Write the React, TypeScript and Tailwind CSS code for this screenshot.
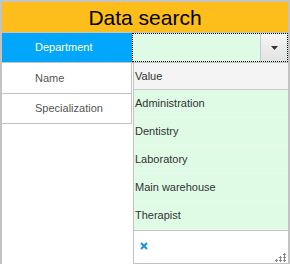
import React from "react";

const font = { fontFamily: '"Liberation Sans", Arial, sans-serif' };

export default function App() {
  const items = ["Administration", "Dentistry", "Laboratory", "Main warehouse", "Therapist"];
  return (
    <div
      className="relative w-[290px] h-[264px] overflow-hidden bg-white border-l-2 border-t-2 border-r-2 border-[#c3c3c3]"
      style={font}
    >
      <div className="h-[31px] bg-[#fdbe1c] border-b border-[#c3c3c3] flex items-center justify-center text-[21px] text-black leading-none">
        Data search
      </div>
      <div className="flex h-[30px] border-b border-[#c3c3c3]">
        <div className="w-[130px] bg-[#02a7fb] text-white text-[11px] flex items-center pl-[33px]">
          Department
        </div>
        <div className="flex-1 flex bg-[#dffbe6] border border-dotted border-black">
          <div className="flex-1" />
          <div className="w-[27px] border-l border-[#c9c9c9] bg-gradient-to-b from-[#f5f5f5] to-[#e3e3e3] flex items-center justify-center">
            <svg width="7" height="4" viewBox="0 0 7 4">
              <path d="M0 0H7L3.5 4Z" fill="#333" />
            </svg>
          </div>
        </div>
      </div>
      <div className="w-[130px] border-r border-[#c3c3c3]">
        <div className="h-[31px] border-b border-[#c3c3c3] flex items-center pl-[33px] text-[11px] text-[#555]">
          Name
        </div>
        <div className="h-[30px] border-b border-[#c3c3c3] flex items-center pl-[33px] text-[11px] text-[#555]">
          Specialization
        </div>
      </div>

      <div className="absolute left-[131px] top-[60px] w-[156px] h-[202px] border border-[#c3c3c3] bg-white flex flex-col">
        <div className="h-[27px] bg-[#f4f4f4] border-b border-[#c9c9c9] flex items-center pl-[1px] text-[11px] text-[#333]">
          Value
        </div>
        {items.map((it) => (
          <div
            key={it}
            className="h-[28px] bg-[#dffbe6] border-b border-[#e9f9ed] flex items-center pl-[1px] text-[11px] text-[#333]"
          >
            {it}
          </div>
        ))}
        <div className="flex-1 relative border-t border-[#c3c3c3]">
          <svg className="absolute left-[6px] top-[11px]" width="8" height="8" viewBox="0 0 8 8">
            <path d="M1 1L7 7M7 1L1 7" stroke="#1a8fe0" strokeWidth="2" />
          </svg>
          <svg className="absolute right-[2px] bottom-[1px]" width="11" height="11" viewBox="0 0 11 11" fill="#888">
            <rect x="9" y="2" width="1" height="3" />
            <rect x="8" y="3" width="3" height="1" />
            <rect x="5" y="5" width="1" height="3" />
            <rect x="4" y="6" width="3" height="1" />
            <rect x="9" y="5" width="1" height="3" />
            <rect x="8" y="6" width="3" height="1" />
            <rect x="1" y="8" width="1" height="3" />
            <rect x="0" y="9" width="3" height="1" />
            <rect x="5" y="8" width="1" height="3" />
            <rect x="4" y="9" width="3" height="1" />
            <rect x="9" y="8" width="1" height="3" />
            <rect x="8" y="9" width="3" height="1" />
          </svg>
        </div>
      </div>
    </div>
  );
}
